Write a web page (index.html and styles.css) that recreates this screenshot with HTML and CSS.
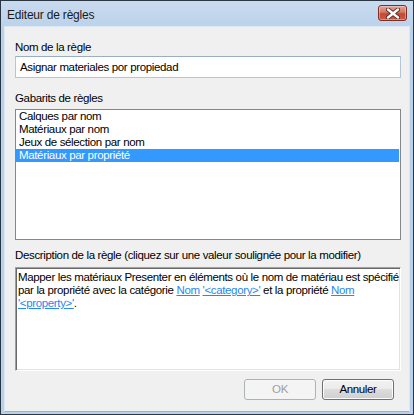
FILE: index.html
```html
<!DOCTYPE html>
<html>
<head>
<meta charset="utf-8">
<link rel="stylesheet" href="styles.css">
</head>
<body>
<div class="window">
  <div class="titlebar">
    <span class="title">Editeur de règles</span>
    <div class="close">
      <svg width="14" height="11" viewBox="0 0 14 11">
        <path d="M2 1.5 L12 9.5 M12 1.5 L2 9.5" stroke="#5a2a24" stroke-width="4.2" stroke-linecap="round"/>
        <path d="M2 1.5 L12 9.5 M12 1.5 L2 9.5" stroke="#ffffff" stroke-width="2.4" stroke-linecap="round"/>
      </svg>
    </div>
  </div>
  <div class="client">
    <div class="label first">Nom de la règle</div>
    <div class="input">Asignar materiales por propiedad</div>
    <div class="label second">Gabarits de règles</div>
    <div class="list">
      <div class="item">Calques par nom</div>
      <div class="item">Matériaux par nom</div>
      <div class="item">Jeux de sélection par nom</div>
      <div class="item selected">Matériaux par propriété</div>
    </div>
    <div class="label third">Description de la règle (cliquez sur une valeur soulignée pour la modifier)</div>
    <div class="desc">Mapper les matériaux Presenter en éléments où le nom de matériau est spécifié<br>par la propriété avec la catégorie <span class="link">Nom</span> <span class="link">'&lt;category&gt;'</span> et la propriété <span class="link">Nom</span><br><span class="link">'&lt;property&gt;'</span>.</div>
    <div class="buttons">
      <div class="btn disabled">OK</div>
      <div class="btn">Annuler</div>
    </div>
  </div>
</div>
</body>
</html>
```
FILE: styles.css
```css
html, body {
  margin: 0;
  padding: 0;
  background: #ffffff;
}
.window {
  width: 414px;
  height: 415px;
  box-sizing: border-box;
  border: 1px solid #2a3644;
  background: linear-gradient(#c9dbef, #b9d1ea 30px, #b9d1ea);
  display: flex;
  flex-direction: column;
  padding: 0 3px 2px 3px;
  font-family: "Liberation Sans", Arial, sans-serif;
  font-size: 11.5px;
  letter-spacing: -0.35px;
  color: #000;
}
.titlebar {
  height: 25px;
  display: flex;
  align-items: flex-start;
  justify-content: space-between;
  flex-shrink: 0;
}
.title {
  margin-left: 3px;
  margin-top: 7px;
  font-size: 12px;
  letter-spacing: -0.2px;
  color: #1b1b1b;
}
.close {
  width: 29px;
  height: 16px;
  margin-top: 4px;
  margin-right: 3px;
  box-sizing: border-box;
  border: 1px solid #7d2d22;
  border-radius: 3px;
  background: linear-gradient(#e5a496, #d47764 45%, #c24a34 55%, #c95a43);
  box-shadow: inset 0 0 0 1px rgba(255,255,255,0.35);
  display: flex;
  align-items: center;
  justify-content: center;
}
.close svg { display: block; }
.client {
  flex: 1;
  background: #f0f0f0;
  border: 1px solid #dce7f4;
  border-bottom-color: #6fc3e8;
  padding: 0 8px 0 10px;
  display: flex;
  flex-direction: column;
}
.label {
  height: 15px;
  line-height: 15px;
  white-space: nowrap;
}
.label.first { margin-top: 13px; }
.label.second { margin-top: 13px; }
.label.third { margin-top: 8px; }
.input {
  margin-top: 1px;
  height: 22px;
  box-sizing: border-box;
  border: 1px solid #b6c6da;
  border-top-color: #9aaec6;
  background: #fff;
  padding-left: 4px;
  line-height: 20px;
}
.list {
  margin-top: 3px;
  height: 131px;
  box-sizing: border-box;
  border: 1px solid #828790;
  background: #fff;
  padding-right: 1px;
}
.item {
  height: 13px;
  line-height: 13px;
  padding-left: 3px;
  white-space: nowrap;
}
.item.selected {
  background: #3399ff;
  color: #fff;
}
.desc {
  margin-top: 4px;
  height: 104px;
  box-sizing: border-box;
  border: 1px solid;
  border-color: #a0a0a0 #ffffff #ffffff #a0a0a0;
  box-shadow: inset 1px 1px 0 #696969, inset -1px -1px 0 #e3e3e3;
  background: #fff;
  padding: 3px 2px 0 2px;
  line-height: 13px;
  white-space: nowrap;
}
.link {
  color: #2a86f0;
  text-decoration: underline;
}
.buttons {
  margin-top: 8px;
  display: flex;
  justify-content: flex-end;
  gap: 6px;
  padding-right: 7px;
}
.btn {
  width: 72px;
  height: 21px;
  box-sizing: border-box;
  border: 1px solid #707070;
  border-radius: 3px;
  background: linear-gradient(#f2f2f2, #ebebeb 50%, #dddddd 50%, #cfcfcf);
  box-shadow: inset 0 0 0 1px #fcfcfc;
  text-align: center;
  line-height: 19px;
}
.btn.disabled {
  border-color: #adb2b5;
  background: #f4f4f4;
  box-shadow: none;
  color: #a0a0a0;
}
```
